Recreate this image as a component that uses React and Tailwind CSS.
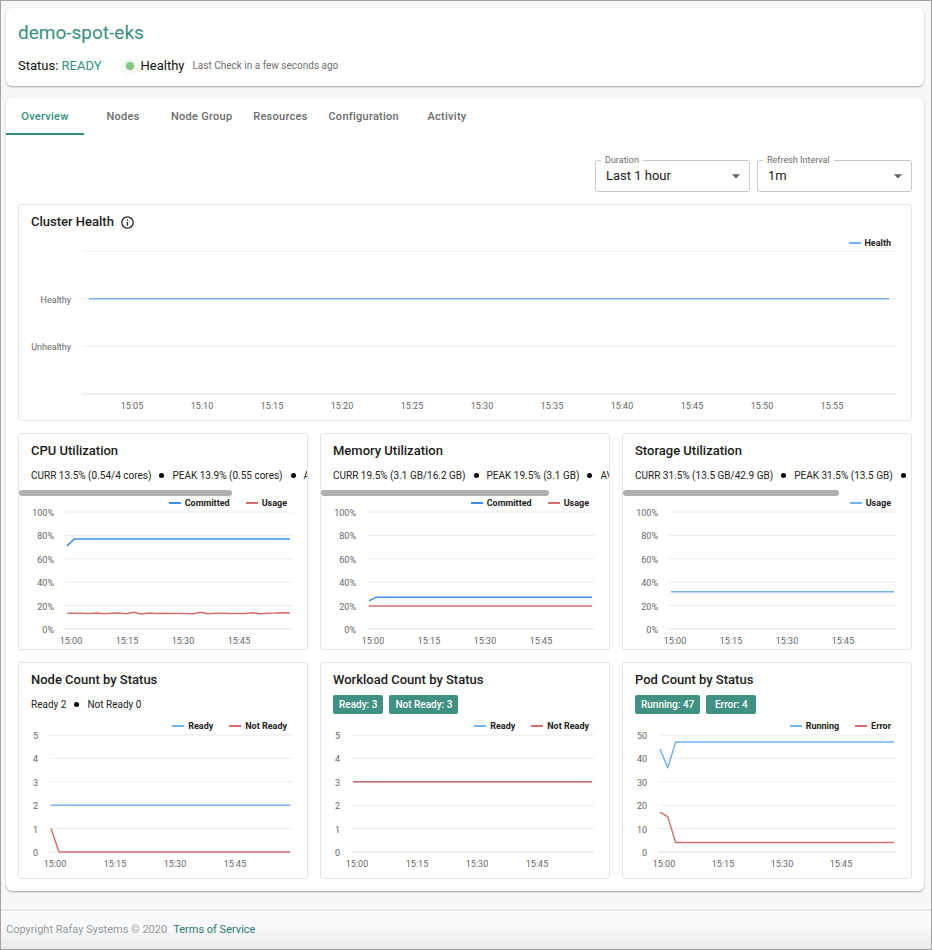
import { useState } from 'react';
import { MdInfoOutline, MdArrowDropDown } from 'react-icons/md';

const BLUE = '#3f8ef2';
const SKY = '#73b1f7';
const RED = '#d86f6f';

const TABS = ['Overview', 'Nodes', 'Node Group', 'Resources', 'Configuration', 'Activity'];
const PERCENT = ['100%', '80%', '60%', '40%', '20%', '0%'];
const QUARTERS = ['15:00', '15:15', '15:30', '15:45'];

// one sample every two minutes, the last value is held until the end
const hold = (values, count = 31) =>
    Array.from({ length: count }, (_, i) => values[Math.min(i, values.length - 1)]);

const CPU_USAGE = [
    13.5, 13.5, 13.5, 13.2, 13.6, 13.1, 13.5, 13.6, 13.1, 14.3, 12.9, 13.7, 13.2, 13.4, 13.2, 13.3,
    13.3, 13.1, 14.4, 13, 13.4, 13.4, 13.2, 13.2, 13.2, 13.9, 13, 13.4, 13.6, 13.9, 13.8,
];

const utilization = [
    {
        title: 'CPU Utilization',
        stats: ['CURR 13.5% (0.54/4 cores)', 'PEAK 13.9% (0.55 cores)', 'AVG 13.4% (0.54 cores)'],
        scroll: 74,
        series: [
            { name: 'Committed', color: BLUE, values: hold([71, 77]) },
            { name: 'Usage', color: RED, values: CPU_USAGE },
        ],
    },
    {
        title: 'Memory Utilization',
        stats: ['CURR 19.5% (3.1 GB/16.2 GB)', 'PEAK 19.5% (3.1 GB)', 'AVG 19.4% (3.1 GB)'],
        scroll: 79,
        series: [
            { name: 'Committed', color: BLUE, values: hold([24, 27.2]) },
            { name: 'Usage', color: RED, values: hold([19.7]) },
        ],
    },
    {
        title: 'Storage Utilization',
        stats: ['CURR 31.5% (13.5 GB/42.9 GB)', 'PEAK 31.5% (13.5 GB)', 'AVG 31.4% (13.5 GB)'],
        scroll: 75,
        series: [{ name: 'Usage', color: SKY, values: hold([31.8]) }],
    },
];

const counts = [
    {
        title: 'Node Count by Status',
        stats: ['Ready 2', 'Not Ready 0'],
        yLabels: ['5', '4', '3', '2', '1', '0'],
        max: 5,
        left: 30,
        series: [
            { name: 'Ready', color: SKY, values: hold([2]) },
            { name: 'Not Ready', color: RED, values: hold([1, 0]) },
        ],
    },
    {
        title: 'Workload Count by Status',
        badges: ['Ready: 3', 'Not Ready: 3'],
        yLabels: ['5', '4', '3', '2', '1', '0'],
        max: 5,
        left: 30,
        series: [
            { name: 'Ready', color: SKY, values: hold([3]) },
            { name: 'Not Ready', color: RED, values: hold([3]) },
        ],
    },
    {
        title: 'Pod Count by Status',
        badges: ['Running: 47', 'Error: 4'],
        yLabels: ['50', '40', '30', '20', '10', '0'],
        max: 50,
        left: 35,
        series: [
            { name: 'Running', color: SKY, values: hold([44, 36, 47]) },
            { name: 'Error', color: RED, values: hold([17, 15, 4]) },
        ],
    },
];

const Legend = ({ series }) => (
    <ul className="flex justify-end gap-4 pr-5 text-[9px] leading-[14px] font-bold text-[#222]">
        {series.map((s) => (
            <li key={s.name} className="flex items-center gap-1">
                <span className="h-0.5 w-3" style={{ backgroundColor: s.color }}></span>
                {s.name}
            </li>
        ))}
    </ul>
);

const LineChart = ({ label, width, height, left, top, bottom, yLabels, xLabels, xStart, xStep, inset, max, series }) => {
    const right = width - 15;
    const rowY = (i) => top + ((bottom - top) * i) / (yLabels.length - 1);
    const x0 = left + inset;
    const x1 = right - inset;

    const toPoints = (values) =>
        values
            .map((v, i) => {
                const x = x0 + ((x1 - x0) * i) / (values.length - 1);
                const y = bottom - ((bottom - top) * v) / max;
                return `${x.toFixed(1)},${y.toFixed(1)}`;
            })
            .join(' ');

    return (
        <svg
            viewBox={`0 0 ${width} ${height}`}
            className="block w-full h-auto overflow-visible"
            role="img"
            aria-label={label}
        >
            {yLabels.map((text, i) => (
                <g key={i}>
                    <line
                        x1={left}
                        x2={right}
                        y1={rowY(i)}
                        y2={rowY(i)}
                        stroke={i === yLabels.length - 1 ? '#dde1ef' : '#ececec'}
                    />
                    <text x={left - 11} y={rowY(i) + 4} textAnchor="end" className="text-[9px] fill-[#666]">
                        {text}
                    </text>
                </g>
            ))}
            {xLabels.map((text, i) => (
                <text
                    key={text}
                    x={xStart + xStep * i}
                    y={bottom + 15}
                    textAnchor="middle"
                    className="text-[9px] fill-[#666]"
                >
                    {text}
                </text>
            ))}
            {series.map((s) => (
                <polyline
                    key={s.name}
                    points={toPoints(s.values)}
                    fill="none"
                    stroke={s.color}
                    strokeWidth="1.5"
                    strokeLinejoin="round"
                />
            ))}
        </svg>
    );
};

const Card = ({ title, icon, children }) => (
    <section className="min-w-0 overflow-hidden rounded-[3px] border border-[#e4e4e4] bg-white pt-[7px]">
        <h2 className="flex items-center gap-1.5 px-3 text-[13px] leading-5 font-medium text-[#1c1c1c]">
            {title}
            {icon}
        </h2>
        {children}
    </section>
);

const Stats = ({ items }) => (
    <div className="flex h-[29px] items-center gap-2 overflow-x-auto px-3 text-[10px] whitespace-nowrap text-[#222] [scrollbar-width:none]">
        {items.map((item, i) => (
            <span key={item} className="flex shrink-0 items-center gap-2">
                {i > 0 && <span className="size-[5px] rounded-full bg-black"></span>}
                {item}
            </span>
        ))}
    </div>
);

const Select = ({ id, label, options }) => (
    <div className="relative w-[155px]">
        <label htmlFor={id} className="absolute -top-1.5 left-1.5 bg-white px-1 text-[9px] leading-3 text-[#6b6b6b]">
            {label}
        </label>
        <select
            id={id}
            className="h-8 w-full appearance-none rounded-[3px] border border-[#c8c8c8] bg-transparent px-2.5 text-[13px] text-[#222]"
        >
            {options.map((o) => (
                <option key={o}>{o}</option>
            ))}
        </select>
        <MdArrowDropDown size={20} className="pointer-events-none absolute top-1.5 right-1 text-[#666]" />
    </div>
);

const App = () => {
    const [tab, setTab] = useState('Overview');

    return (
        <div className="flex min-h-screen flex-col border border-[#a3a3a3] bg-[#f7f8fa] font-['Roboto',sans-serif]">
            <header className="mt-[7px] mr-[7px] ml-[5px] rounded-md bg-white px-3 pt-3 pb-2.5 shadow-[0_1px_2px_rgba(0,0,0,0.35)]">
                <h1 className="text-[19px] leading-[26px] text-[#34907f]">demo-spot-eks</h1>
                <div className="mt-2.5 flex items-center text-[13px] leading-5 text-[#111]">
                    <span>
                        Status: <span className="text-[#34907f]">READY</span>
                    </span>
                    <span className="ml-6 size-2 rounded-full bg-[#86c482] shadow-[0_0_6px_2px_rgba(134,196,130,0.3)]"></span>
                    <span className="ml-[7px]">Healthy</span>
                    <span className="ml-2 text-[10px] text-[#6f6f6f]">Last Check in a few seconds ago</span>
                </div>
            </header>

            <main className="mt-3 mr-[7px] ml-[5px] rounded-md bg-white pb-3 shadow-[0_1px_2px_rgba(0,0,0,0.35)]">
                <nav className="flex">
                    {TABS.map((t) => (
                        <button
                            key={t}
                            type="button"
                            onClick={() => setTab(t)}
                            className={`h-[37px] min-w-[78px] border-b-2 px-[9px] pt-1 text-[11px] font-medium tracking-wide ${
                                t === tab ? 'border-[#34907f] text-[#34907f]' : 'border-transparent text-[#6b6b6b]'
                            }`}
                        >
                            {t}
                        </button>
                    ))}
                </nav>

                <div className="mt-[25px] flex justify-end gap-[7px] px-3">
                    <Select id="duration" label="Duration" options={['Last 1 hour', 'Last 6 hours', 'Last 1 day']} />
                    <Select id="refresh" label="Refresh Interval" options={['1m', '5m', '15m']} />
                </div>

                <div className="mt-3 flex flex-col gap-3 px-3">
                    <Card title="Cluster Health" icon={<MdInfoOutline size={15} />}>
                        <div className="pt-1">
                            <Legend series={[{ name: 'Health', color: SKY }]} />
                            <LineChart
                                label="Cluster Health"
                                width={892}
                                height={170}
                                left={63}
                                top={1}
                                bottom={144}
                                inset={7}
                                yLabels={['', 'Healthy', 'Unhealthy', '']}
                                xLabels={['15:05', '15:10', '15:15', '15:20', '15:25', '15:30', '15:35', '15:40', '15:45', '15:50', '15:55']}
                                xStart={113}
                                xStep={70}
                                max={3}
                                series={[{ name: 'Health', color: SKY, values: hold([2]) }]}
                            />
                        </div>
                    </Card>

                    <div className="grid grid-cols-3 gap-3">
                        {utilization.map((c) => (
                            <Card key={c.title} title={c.title}>
                                <Stats items={c.stats} />
                                <div className="h-1.5 rounded-full bg-[#b0b0b0]" style={{ width: `${c.scroll}%` }}></div>
                                <Legend series={c.series} />
                                <LineChart
                                    label={c.title}
                                    width={288}
                                    height={139}
                                    left={46}
                                    top={2}
                                    bottom={119}
                                    inset={2}
                                    yLabels={PERCENT}
                                    xLabels={QUARTERS}
                                    xStart={52}
                                    xStep={56}
                                    max={100}
                                    series={c.series}
                                />
                            </Card>
                        ))}

                        {counts.map((c) => (
                            <Card key={c.title} title={c.title}>
                                {c.stats && <Stats items={c.stats} />}
                                {c.badges && (
                                    <div className="flex h-[29px] items-center gap-1.5 px-3">
                                        {c.badges.map((b) => (
                                            <span
                                                key={b}
                                                className="min-w-[50px] rounded-xs bg-[#3f9182] px-1.5 text-center text-[10px] leading-[19px] font-medium text-white"
                                            >
                                                {b}
                                            </span>
                                        ))}
                                    </div>
                                )}
                                <Legend series={c.series} />
                                <div className="pb-1.5">
                                    <LineChart
                                        label={c.title}
                                        width={288}
                                        height={139}
                                        left={c.left}
                                        top={2}
                                        bottom={119}
                                        inset={2}
                                        yLabels={c.yLabels}
                                        xLabels={QUARTERS}
                                        xStart={c.left + 6}
                                        xStep={c.left === 30 ? 60 : 59}
                                        max={c.max}
                                        series={c.series}
                                    />
                                </div>
                            </Card>
                        ))}
                    </div>
                </div>
            </main>

            <footer className="mt-[18px] flex flex-1 items-center gap-1.5 border-t-2 border-[#e6e7e9] bg-gradient-to-b from-[#f8f9fa] from-40% to-[#e9eaeb] px-[5px] text-[11px] text-[#999]">
                <span>Copyright Rafay Systems © 2020</span>
                <a href="#terms" className="text-[#2a7d73]">
                    Terms of Service
                </a>
            </footer>
        </div>
    );
};

export default App;
